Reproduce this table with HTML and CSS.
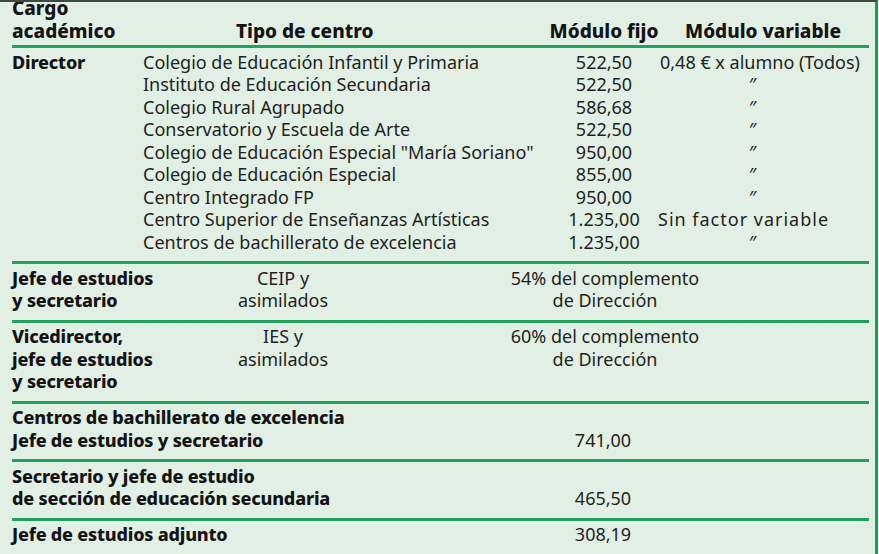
FILE: index.html
```html
<!DOCTYPE html>
<html lang="es">
<head>
<meta charset="utf-8">
<title>Complementos de cargos académicos</title>
<link rel="stylesheet" href="styles.css">
</head>
<body>
<div class="sheet">
  <div class="row head grid4">
    <div class="b cargo-h">Cargo<br>académico</div>
    <div class="b tipo-h">Tipo de centro</div>
    <div class="b center">Módulo fijo</div>
    <div class="b var-h">Módulo variable</div>
  </div>

  <div class="row director grid4">
    <div class="b dir-label">Director</div>
    <div>Colegio de Educación Infantil y Primaria</div><div class="center">522,50</div><div class="var">0,48 € x alumno (Todos)</div>
    <div>Instituto de Educación Secundaria</div><div class="center">522,50</div><div class="ditto">″</div>
    <div>Colegio Rural Agrupado</div><div class="center">586,68</div><div class="ditto">″</div>
    <div>Conservatorio y Escuela de Arte</div><div class="center">522,50</div><div class="ditto">″</div>
    <div>Colegio de Educación Especial "María Soriano"</div><div class="center">950,00</div><div class="ditto">″</div>
    <div>Colegio de Educación Especial</div><div class="center">855,00</div><div class="ditto">″</div>
    <div>Centro Integrado FP</div><div class="center">950,00</div><div class="ditto">″</div>
    <div>Centro Superior de Enseñanzas Artísticas</div><div class="center">1.235,00</div><div class="var sin">Sin factor variable</div>
    <div>Centros de bachillerato de excelencia</div><div class="center">1.235,00</div><div class="ditto">″</div>
  </div>

  <div class="row grid3">
    <div class="b">Jefe de estudios<br>y secretario</div>
    <div class="center">CEIP y<br>asimilados</div>
    <div class="center">54% del complemento<br>de Dirección</div>
  </div>

  <div class="row grid3">
    <div class="b">Vicedirector,<br>jefe de estudios<br>y secretario</div>
    <div class="center">IES y<br>asimilados</div>
    <div class="center">60% del complemento<br>de Dirección</div>
  </div>

  <div class="row grid2">
    <div class="b">Centros de bachillerato de excelencia<br>Jefe de estudios y secretario</div>
    <div class="center val">741,00</div>
  </div>

  <div class="row grid2">
    <div class="b">Secretario y jefe de estudio<br>de sección de educación secundaria</div>
    <div class="center val">465,50</div>
  </div>

  <div class="row grid2">
    <div class="b">Jefe de estudios adjunto</div>
    <div class="center val">308,19</div>
  </div>
</div>
</body>
</html>
```
FILE: styles.css
```css
html, body {
  margin: 0;
  padding: 0;
  background: #eaf4ed;
}

body {
  width: 879px;
  height: 554px;
  overflow: hidden;
  font-family: "Noto Sans", "Open Sans", sans-serif;
  font-size: 18px;
  line-height: 22.5px;
  color: #231f20;
}

.sheet {
  width: 875px;
  height: 552px;
  background: #e2efe5;
  border-top: 2px solid #3c4842;
  border-right: 3px solid #1f9a57;
  overflow: hidden;
}

.row {
  margin: 0 6px 0 12px;
  padding: 2.5px 0 8px;
  border-bottom: 3px solid #23a05c;
}

.b {
  font-weight: 800;
  color: #141414;
  letter-spacing: -0.2px;
}

.center {
  text-align: center;
}

.grid4 {
  display: grid;
  grid-template-columns: 131px 407px 108px 1fr;
}

.grid3 {
  display: grid;
  grid-template-columns: 200px 142px 502px;
}

.grid2 {
  display: grid;
  grid-template-columns: 533px 116px;
}

.head {
  padding: 0 0 2px;
  line-height: 23px;
  font-size: 19px;
}

.head .b {
  letter-spacing: 0;
  align-self: end;
}

.head .cargo-h {
  margin-top: -5px;
}

.tipo-h {
  padding-left: 93px;
}

.head .center {
  margin-left: -4px;
  margin-right: -4px;
}

.var-h {
  padding-left: 27px;
  white-space: nowrap;
}

.dir-label {
  grid-row: span 9;
}

.var {
  padding-left: 2px;
  white-space: nowrap;
}

.var.sin {
  padding-left: 0;
  letter-spacing: 1px;
}

.ditto {
  padding-left: 91px;
  font-size: 18px;
}

.val {
  align-self: end;
}
```
